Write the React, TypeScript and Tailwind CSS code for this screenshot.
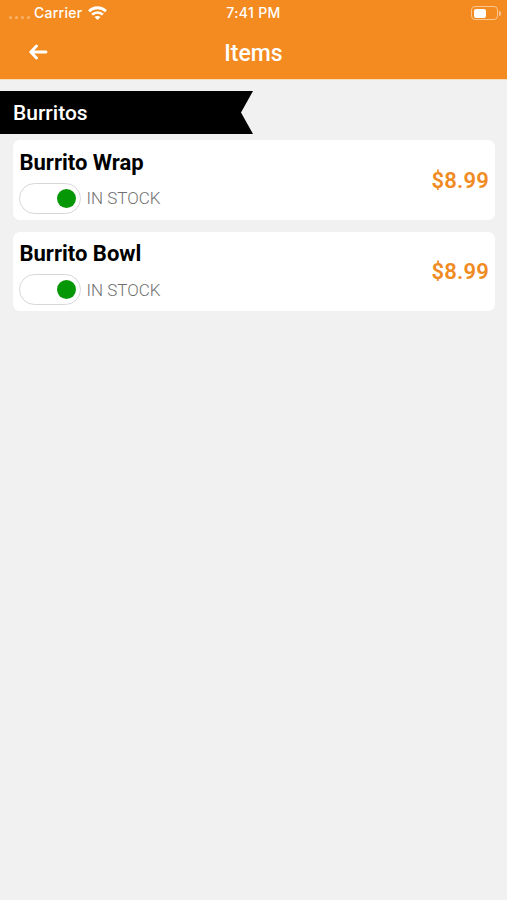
import React from "react";

type Item = { name: string; price: string };

const items: Item[] = [
  { name: "Burrito Wrap", price: "$8.99" },
  { name: "Burrito Bowl", price: "$8.99" },
];

function StatusBar() {
  return (
    <div className="grid h-[26px] grid-cols-3 items-center pl-[9px] pr-[6px] font-['Inter',sans-serif] text-[14px] leading-[26px]">
      <div className="flex items-center">
        <div className="mt-2 flex gap-[3px]">
          {[0, 1, 2, 3].map((dot) => (
            <span key={dot} className="size-[3px] rounded-full bg-white/35" />
          ))}
        </div>
        <span className="ml-1 w-[49px] whitespace-nowrap text-[14px] font-medium tracking-[0.25px]">Carrier</span>
        <svg className="ml-[5px] h-[14px] w-[19px]" viewBox="0 0 19 14" fill="none" stroke="white">
          <path d="M1 5.2C5.8.6 13.2.6 18 5.2" strokeWidth="2.8" />
          <path d="M4.1 8.6c3-2.9 7.8-2.9 10.8 0" strokeWidth="2.6" />
          <path d="M9.5 13.9 6.5 11c1.7-1.5 4.3-1.5 6 0Z" fill="white" stroke="none" />
        </svg>
      </div>
      <span className="-ml-[3px] whitespace-nowrap text-center text-[14px] font-medium tracking-[0.35px]">7:41 PM</span>
      <div className="flex items-center justify-end">
        <div className="flex h-[14px] w-[27px] rounded-[4px] border border-white/50 p-[1.5px]">
          <div className="h-full w-[12px] rounded-[2px] bg-white" />
        </div>
        <div className="ml-px h-[5px] w-[2px] rounded-r-full bg-white/50" />
      </div>
    </div>
  );
}

function ItemCard({ name, price }: Item) {
  return (
    <article className="flex h-[79.5px] items-center justify-between rounded-[7px] bg-white px-[6px]">
      <div>
        <h3 className="mt-[3px] pl-[0.5px] text-[22px] font-bold leading-[28px] text-black">{name}</h3>
        <div className="mt-[6px] flex items-center">
          <button
            aria-label={`${name} in stock`}
            className="flex h-[31px] w-[62px] items-center justify-end rounded-full border-[1.5px] border-[#d8d8d8] bg-white pr-[4px]"
          >
            <span className="size-[19px] rounded-full bg-[#069706]" />
          </button>
          <span className="ml-[5.5px] text-[17px] font-light leading-[22px] text-[#707070]">IN STOCK</span>
        </div>
      </div>
      <span className="mt-px text-[22px] font-semibold tracking-[0.2px] text-[#ef8b22]">{price}</span>
    </article>
  );
}

export default function App() {
  return (
    <div className="h-[900px] w-full overflow-hidden bg-[#f1f1f1] font-['Roboto',sans-serif]">
      <header className="h-[79px] bg-[#f38b20] text-white">
        <StatusBar />
        <div className="grid h-[53px] grid-cols-3 items-center">
          <button aria-label="Back" className="mb-[2px] ml-[29px] w-[19px]">
            <svg className="h-[16px] w-[19px]" viewBox="0 0 19 16" fill="none" stroke="white" strokeWidth="2.9" strokeLinecap="round" strokeLinejoin="round">
              <path d="M7.5 2 1.8 8l5.7 6M2 8h15" />
            </svg>
          </button>
          <h1 className="mt-[3px] text-center text-[23px] font-medium">Items</h1>
        </div>
      </header>
      <div className="h-px bg-[#fbdcbb]" />
      <main className="pt-[11px]">
        <h2 className="h-[43px] w-[253px] bg-black pl-[13px] text-[21px] font-medium leading-[45px] text-white [clip-path:polygon(0_0,100%_0,241px_50%,100%_100%,0_100%)]">
          Burritos
        </h2>
        <section className="ml-[13px] mr-[12px] mt-[6px] flex flex-col gap-[12px]">
          {items.map((item) => (
            <ItemCard key={item.name} {...item} />
          ))}
        </section>
      </main>
    </div>
  );
}
